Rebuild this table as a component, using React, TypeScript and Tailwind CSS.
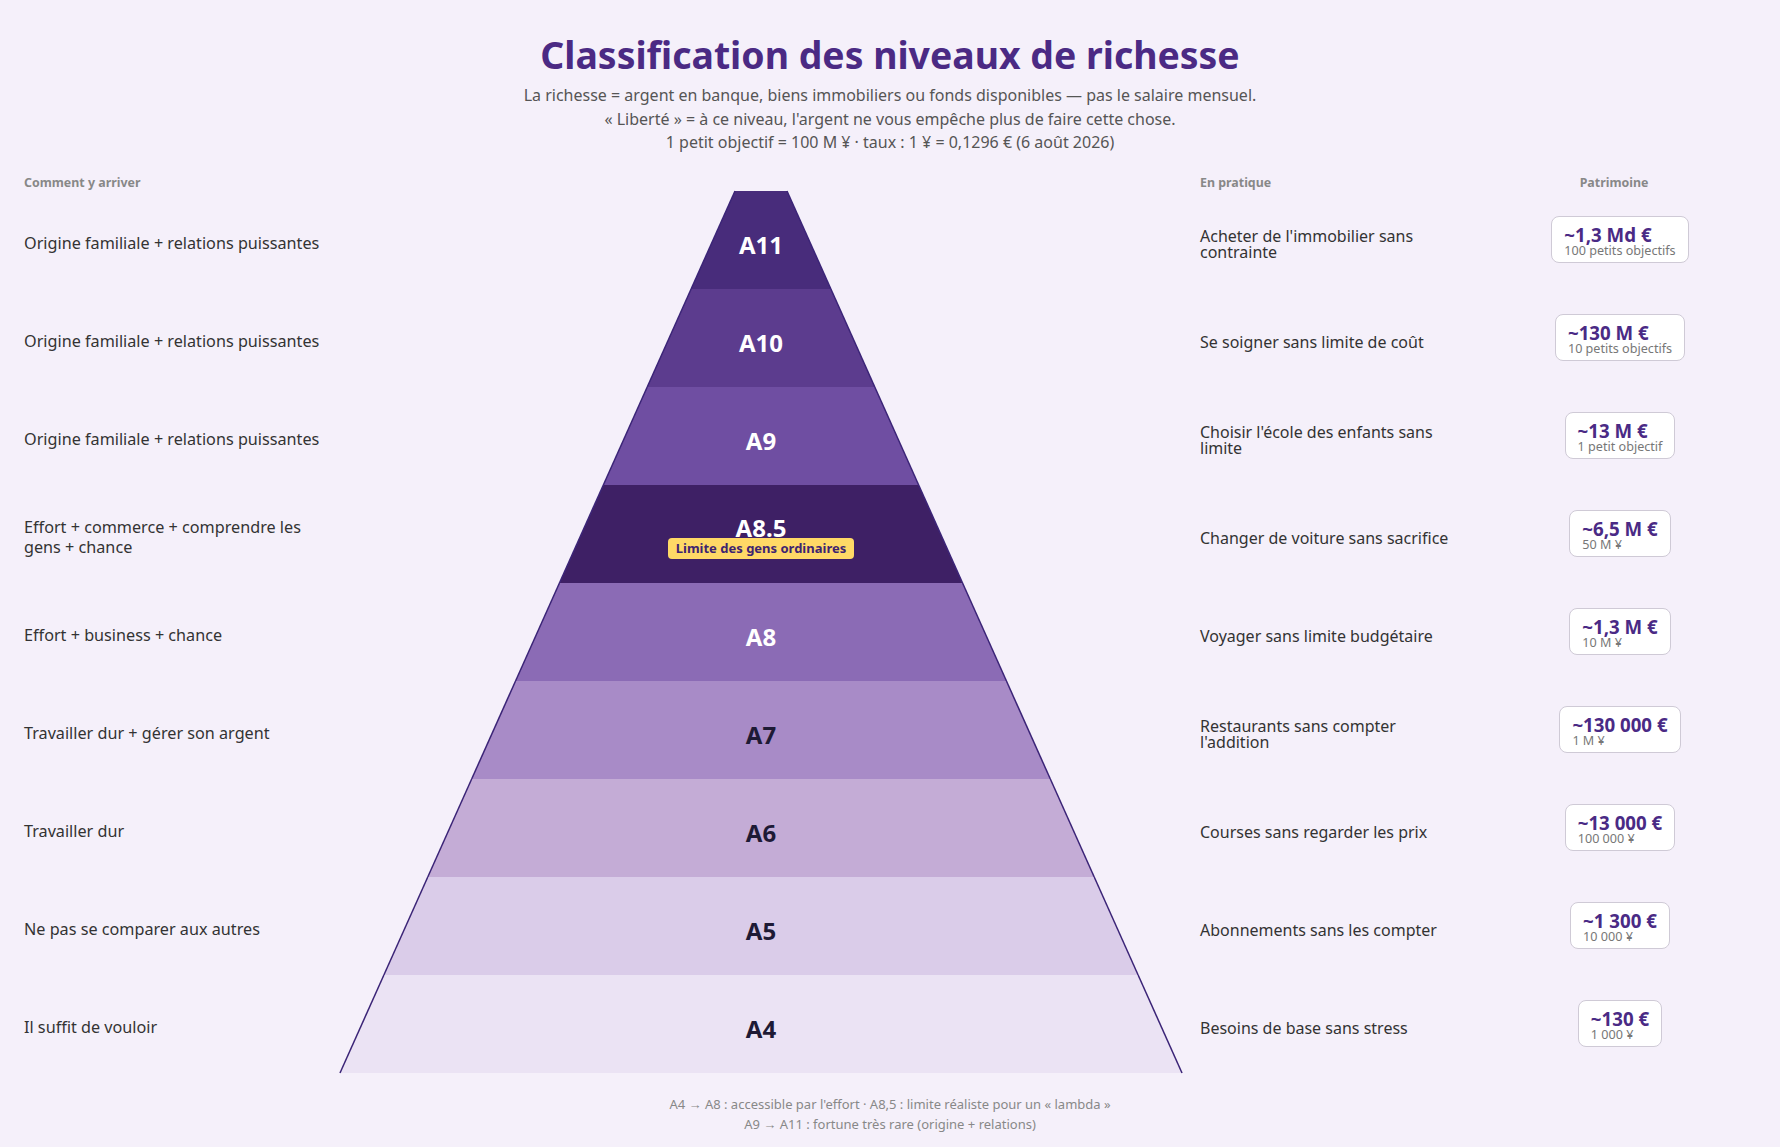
import React from 'react';

// --- Data ---

interface Level {
  label: string;
  fill: string;
  light: boolean; // white label on a dark band
  how: string;
  practice: string;
  amount: string;
  sub: string;
  badge?: string;
}

const LEVELS: Level[] = [
  { label: 'A11', fill: '#482c7b', light: true, how: 'Origine familiale + relations puissantes', practice: "Acheter de l'immobilier sans contrainte", amount: '~1,3 Md €', sub: '100 petits objectifs' },
  { label: 'A10', fill: '#5c3c8e', light: true, how: 'Origine familiale + relations puissantes', practice: 'Se soigner sans limite de coût', amount: '~130 M €', sub: '10 petits objectifs' },
  { label: 'A9', fill: '#6f4ea2', light: true, how: 'Origine familiale + relations puissantes', practice: "Choisir l'école des enfants sans limite", amount: '~13 M €', sub: '1 petit objectif' },
  { label: 'A8.5', fill: '#3e2065', light: true, how: 'Effort + commerce + comprendre les gens + chance', practice: 'Changer de voiture sans sacrifice', amount: '~6,5 M €', sub: '50 M ¥', badge: 'Limite des gens ordinaires' },
  { label: 'A8', fill: '#8b6bb5', light: true, how: 'Effort + business + chance', practice: 'Voyager sans limite budgétaire', amount: '~1,3 M €', sub: '10 M ¥' },
  { label: 'A7', fill: '#a88bc7', light: false, how: 'Travailler dur + gérer son argent', practice: "Restaurants sans compter l'addition", amount: '~130 000 €', sub: '1 M ¥' },
  { label: 'A6', fill: '#c4acd6', light: false, how: 'Travailler dur', practice: 'Courses sans regarder les prix', amount: '~13 000 €', sub: '100 000 ¥' },
  { label: 'A5', fill: '#dacce9', light: false, how: 'Ne pas se comparer aux autres', practice: 'Abonnements sans les compter', amount: '~1 300 €', sub: '10 000 ¥' },
  { label: 'A4', fill: '#ebe3f4', light: false, how: 'Il suffit de vouloir', practice: 'Besoins de base sans stress', amount: '~130 €', sub: '1 000 ¥' },
];

// pyramid geometry (px)
const W = 842;
const ROW_H = 98;
const CX = W / 2;
const TOP_HALF = 26;
const SLOPE = (CX - TOP_HALF) / (ROW_H * LEVELS.length);

const halfAt = (y: number) => TOP_HALF + y * SLOPE;

// --- Pieces ---

const Band: React.FC<{ index: number; level: Level }> = ({ index, level }) => {
  const t = halfAt(index * ROW_H);
  const b = halfAt((index + 1) * ROW_H);
  const pts = `${CX - t},0 ${CX + t},0 ${CX + b},${ROW_H} ${CX - b},${ROW_H}`;

  return (
    <div className="relative h-[98px]">
      <svg width={W} height={ROW_H} viewBox={`0 0 ${W} ${ROW_H}`} className="block overflow-visible">
        <polygon points={pts} fill={level.fill} />
        <line x1={CX - t} y1={0} x2={CX - b} y2={ROW_H} stroke="#3b2477" strokeWidth={1.5} />
        <line x1={CX + t} y1={0} x2={CX + b} y2={ROW_H} stroke="#3b2477" strokeWidth={1.5} />
      </svg>
      {level.badge ? (
        <div className="absolute inset-0 flex flex-col items-center justify-center pt-[8px]">
          <span className="text-[24px] font-bold leading-none text-white">{level.label}</span>
          <span className="-mt-[2px] rounded bg-[#ffd966] px-2 py-[2px] text-[13px] font-bold leading-[17px] text-[#3d2470]">
            {level.badge}
          </span>
        </div>
      ) : (
        <div className="absolute inset-0 flex items-center justify-center pt-[10px]">
          <span className={`text-[24px] font-bold leading-none ${level.light ? 'text-white' : 'text-[#1e1a35]'}`}>
            {level.label}
          </span>
        </div>
      )}
    </div>
  );
};

const AmountBox: React.FC<{ amount: string; sub: string }> = ({ amount, sub }) => (
  <div className="rounded-lg border border-[#cfcad6] bg-white px-3 pt-[9px] pb-[5px]">
    <div className="whitespace-nowrap text-[18.7px] font-bold leading-none text-[#4a2a85]">{amount}</div>
    <div className="whitespace-nowrap text-[12.6px] leading-none text-[#777]">{sub}</div>
  </div>
);

// --- Main App Component ---

const App: React.FC = () => {
  return (
    <div className="min-h-screen bg-[#f5f0fa] px-6 pt-[32px] pb-4 font-['Noto_Sans',sans-serif]">
      <h1 className="text-center text-[37.4px] font-bold leading-[46px] text-[#4b2a84]">
        Classification des niveaux de richesse
      </h1>
      <div className="mt-[6px] text-center text-[16px] leading-[23.5px] text-[#555]">
        <p>La richesse = argent en banque, biens immobiliers ou fonds disponibles — pas le salaire mensuel.</p>
        <p>« Liberté » = à ce niveau, l'argent ne vous empêche plus de faire cette chose.</p>
        <p>1 petit objectif = 100 M ¥ · taux : 1 ¥ = 0,1296 € (6 août 2026)</p>
      </div>

      <div className="mt-[20px] grid grid-cols-[316px_842px_302px_272px]">
        {/* column headers */}
        <div className="h-4 text-[12.4px] font-bold leading-4 text-[#888]">Comment y arriver</div>
        <div className="h-4" />
        <div className="h-4 pl-[18px] text-[12.4px] font-bold leading-4 text-[#888]">En pratique</div>
        <div className="h-4 pr-3 text-center text-[12.4px] font-bold leading-4 text-[#888]">Patrimoine</div>

        {LEVELS.map((level, i) => (
          <React.Fragment key={level.label}>
            <div className="flex h-[98px] items-center pt-[7px] pr-4 text-[16.2px] leading-5 text-[#333]">
              <p>{level.how}</p>
            </div>
            <Band index={i} level={level} />
            <div className="flex h-[98px] items-center pt-[9px] pl-[18px]">
              <p className="max-w-[262px] text-[16px] leading-4 text-[#333]">{level.practice}</p>
            </div>
            <div className="flex h-[98px] items-center justify-center">
              <AmountBox amount={level.amount} sub={level.sub} />
            </div>
          </React.Fragment>
        ))}
      </div>

      <footer className="mt-[21px] text-center text-[13px] leading-5 text-[#888]">
        <p>A4 → A8 : accessible par l'effort · A8,5 : limite réaliste pour un « lambda »</p>
        <p>A9 → A11 : fortune très rare (origine + relations)</p>
      </footer>
    </div>
  );
};

export default App;
